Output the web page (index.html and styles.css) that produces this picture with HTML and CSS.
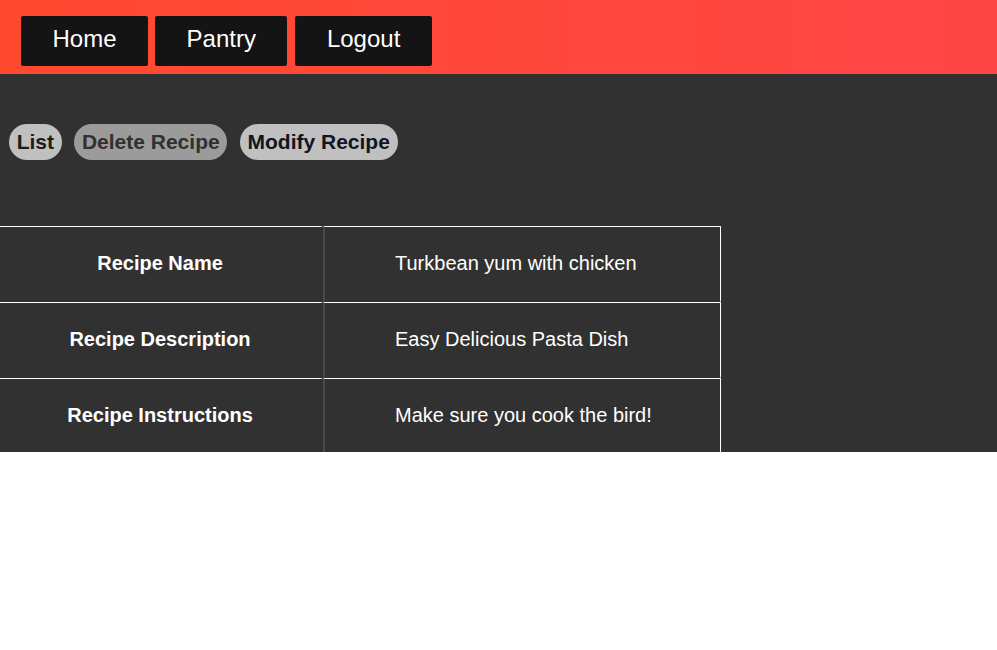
FILE: index.html
```html
<!DOCTYPE html>
<html>
<head>
<meta charset="utf-8">
<link rel="stylesheet" href="styles.css">
</head>
<body>
<header class="topbar">
  <a class="nav-btn" href="#">Home</a>
  <a class="nav-btn" href="#">Pantry</a>
  <a class="nav-btn" href="#">Logout</a>
</header>
<main class="content">
  <div class="pills">
    <button class="pill">List</button>
    <button class="pill pill-active">Delete Recipe</button>
    <button class="pill pill-dark">Modify Recipe</button>
  </div>
  <table class="recipe">
    <tr>
      <th>Recipe Name</th>
      <td>Turkbean yum with chicken</td>
    </tr>
    <tr>
      <th>Recipe Description</th>
      <td>Easy Delicious Pasta Dish</td>
    </tr>
    <tr>
      <th>Recipe Instructions</th>
      <td>Make sure you cook the bird!</td>
    </tr>
  </table>
</main>
</body>
</html>
```
FILE: styles.css
```css
html, body {
  margin: 0;
  padding: 0;
  background: #ffffff;
  font-family: "Liberation Sans", Arial, sans-serif;
}

.topbar {
  height: 74px;
  box-sizing: border-box;
  padding: 16px 0 0 21px;
  display: flex;
  align-items: flex-start;
  gap: 7px;
  background: linear-gradient(90deg, #ff4a30 0%, #ff4647 100%);
}

.nav-btn {
  display: flex;
  align-items: center;
  justify-content: center;
  height: 50px;
  padding: 0 31.5px 5px;
  box-sizing: border-box;
  background: #141414;
  color: #ffffff;
  font-size: 24px;
  text-decoration: none;
  border-radius: 2px;
}
.nav-btn + .nav-btn + .nav-btn { margin-left: 1px; }

.content {
  background: #313131;
  height: 378px;
  overflow: hidden;
  padding-top: 50px;
  box-sizing: border-box;
}

.pills {
  display: flex;
  gap: 12.5px;
  padding-left: 9px;
}

.pill {
  height: 36px;
  padding: 0 7.7px;
  border: none;
  border-radius: 18px;
  background: #c0c0c0;
  color: #1c1c1c;
  font-family: "Liberation Sans", Arial, sans-serif;
  font-weight: bold;
  font-size: 21px;
  line-height: 36px;
}
.pill-active {
  background: #9b9b9b;
  color: #303030;
}
.pill-dark {
  color: #111522;
}

.recipe {
  margin-top: 66px;
  border-collapse: separate;
  border-spacing: 0;
  color: #ffffff;
  font-size: 20px;
}

.recipe th {
  width: 323px;
  height: 76px;
  box-sizing: border-box;
  padding: 0 1px 2px 0;
  border-top: 1px solid #ffffff;
  border-bottom: 1px solid #313131;
  border-right: 2px solid #313131;
  text-align: center;
  vertical-align: middle;
  font-weight: bold;
}

.recipe td {
  width: 398px;
  height: 76px;
  box-sizing: border-box;
  padding: 0 0 2px 70px;
  border-top: 1px solid #ffffff;
  border-bottom: 1px solid #313131;
  border-left: 2px solid #4a4a4a;
  border-right: 1px solid #ffffff;
  text-align: left;
  vertical-align: middle;
  font-weight: normal;
}
```
